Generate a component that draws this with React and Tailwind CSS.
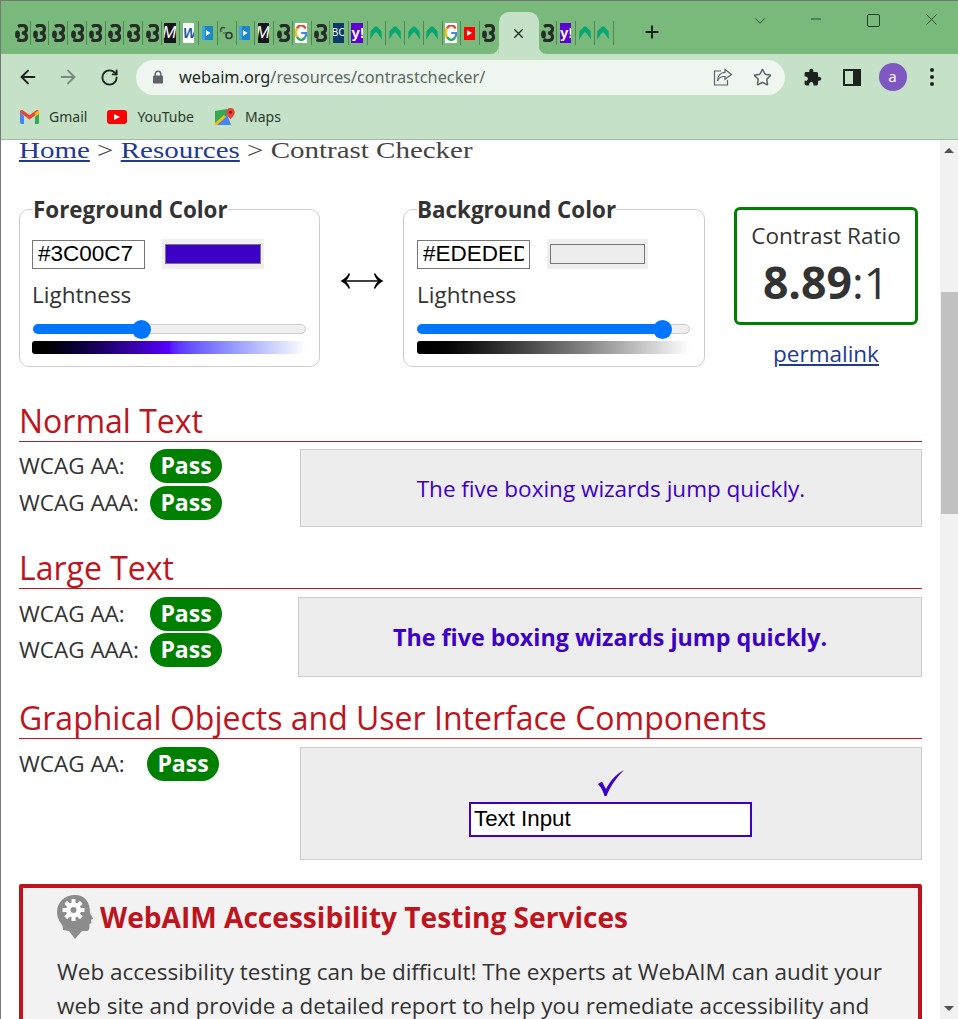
import { ArrowLeft, ArrowRight, RotateCw, Star, X, Plus, ChevronDown, Minus } from "lucide-react";

const SANS = "font-['Open_Sans',sans-serif]";

function Swirl() {
    return (
        <svg width="13" height="18" viewBox="0 0 13 18" className="shrink-0">
            <path
                d="M3 2.500 C6.500 0.500 11.500 1 11.500 5 C11.500 7.500 9.500 8.800 7 9 C9.500 9.200 11.500 10.500 11.500 13 C11.500 17 6 17.500 2.500 15.500"
                fill="none"
                stroke="#262c28"
                strokeWidth="3.200"
            />
            <ellipse cx="2.500" cy="10.500" rx="2.400" ry="4" fill="#262c28" />
        </svg>
    );
}

function MIcon() {
    return (
        <div className="w-[11.500px] h-[20px] bg-[#15161a] text-white text-[17px] leading-[20px] italic overflow-hidden whitespace-nowrap font-['Liberation_Sans',sans-serif]">
            <span className="inline-block -ml-[2px]">M</span>
        </div>
    );
}

function W3Icon() {
    return (
        <div className="w-[11.500px] h-[20px] bg-white text-[#1a5aa8] text-[14px] font-bold leading-[20px] overflow-hidden whitespace-nowrap italic font-['Liberation_Sans',sans-serif]">
            W3
        </div>
    );
}

function PlayIcon() {
    return (
        <svg width="11" height="14" viewBox="0 0 11 14">
            <rect width="11" height="14" fill="#1b87c9" />
            <path d="M0 0h3v14H0z" fill="#3aa6dd" />
            <path d="M4 4l4.500 3L4 10z" fill="#fff" />
        </svg>
    );
}

function CoIcon() {
    return (
        <svg width="13" height="14" viewBox="0 0 13 14">
            <path d="M5 2 C1 0 0 4 1 6" fill="none" stroke="#3a4a3c" strokeWidth="1.500" />
            <path d="M3 7h5" stroke="#4d6a50" strokeWidth="1.200" />
            <circle cx="9" cy="9.500" r="3" fill="none" stroke="#2e3a30" strokeWidth="1.500" />
        </svg>
    );
}

function GoogleIcon() {
    return (
        <div className="w-[12px] h-[20px] bg-white flex items-center justify-center overflow-hidden">
            <svg width="12" height="16" viewBox="0 0 12 16">
                <path d="M10.500 3.500 A5 6.500 0 0 0 2 3.500" fill="none" stroke="#ea4335" strokeWidth="2.400" />
                <path d="M2 3.500 A5 6.500 0 0 0 2 12" fill="none" stroke="#fbbc05" strokeWidth="2.400" />
                <path d="M2 12 A5 6.500 0 0 0 10 12.500" fill="none" stroke="#34a853" strokeWidth="2.400" />
                <path d="M10 12.500 C11 11 11.200 9.500 11 8 H6.200" fill="none" stroke="#4285f4" strokeWidth="2.200" />
            </svg>
        </div>
    );
}

function BcitIcon() {
    return (
        <div className="w-[11.500px] h-[20px] bg-[#0b3b66] text-white text-[10px] leading-[20px] overflow-hidden whitespace-nowrap font-['Liberation_Sans',sans-serif]">
            <span className="inline-block -ml-[1px]">BCIT</span>
        </div>
    );
}

function YahooIcon() {
    return (
        <div className="w-[11.500px] h-[20px] bg-[#5f01d1] text-white text-[15px] font-bold leading-[19px] text-center overflow-hidden whitespace-nowrap font-['Liberation_Sans',sans-serif]">
            y!
        </div>
    );
}

function ArchIcon() {
    return (
        <svg width="12" height="14" viewBox="0 0 12 14">
            <path d="M0 13.500 L0.500 5 L5 0.500 L7 0.500 L11.500 5 L12 13.500 L8 8 L6 6 L4 8 Z" fill="#0aa573" />
        </svg>
    );
}

function YtSmall() {
    return (
        <div className="w-[11.500px] h-[13px] bg-[#f00] flex items-center justify-center">
            <div className="w-0 h-0 border-y-[3px] border-y-transparent border-l-[5px] border-l-white" />
        </div>
    );
}

const before = [
    Swirl, Swirl, Swirl, Swirl, Swirl, Swirl, Swirl, Swirl, MIcon, W3Icon, PlayIcon, CoIcon, PlayIcon, MIcon,
    Swirl, GoogleIcon, Swirl, BcitIcon, YahooIcon, ArchIcon, ArchIcon, ArchIcon, ArchIcon, GoogleIcon, YtSmall,
];
const after = [Swirl, YahooIcon, ArchIcon, ArchIcon];

function TabCell({ Icon, last }) {
    return (
        <div className="w-[18.720px] h-[54px] pt-[21px] relative shrink-0">
            <div className={`h-[24px] flex items-center pl-[2.500px] ${last ? "" : "border-r border-[#4f8a55]"}`}>
                <Icon />
            </div>
        </div>
    );
}

function TabStrip() {
    return (
        <div className="h-[53px] bg-[#79ba7c] flex overflow-hidden shrink-0">
            <div className="w-[11px] shrink-0" />
            <div className="flex -mt-[1px]">
                {before.map((Icon, i) => (
                    <TabCell key={i} Icon={Icon} />
                ))}
                <TabCell Icon={Swirl} last />
            </div>
            <div className="relative w-[40px] h-[42px] mt-[11px] bg-[#c5e1c7] rounded-t-[10px] flex items-center justify-center shrink-0">
                <X size={15} strokeWidth={2.200} className="text-[#1d2a1f] mt-[1px]" />
                <div className="absolute -left-[8px] bottom-0 w-[8px] h-[8px] bg-[#c5e1c7] [clip-path:path('M8_0V8H0A8_8_0_0_0_8_0Z')]" />
                <div className="absolute -right-[8px] bottom-0 w-[8px] h-[8px] bg-[#c5e1c7] [clip-path:path('M0_0V8H8A8_8_0_0_1_0_0Z')]" />
            </div>
            <div className="flex -mt-[1px]">
                {after.map((Icon, i) => (
                    <TabCell key={i} Icon={Icon} />
                ))}
            </div>
            <Plus size={20} strokeWidth={2.400} className="ml-[28px] mt-[21px] text-[#15201a] shrink-0" />
            <div className="ml-[89px] flex items-start text-[#2c3d2e]">
                <ChevronDown size={18} strokeWidth={1.200} className="mt-[11px] shrink-0" />
                <div className="w-[36px] shrink-0" />
                <Minus size={16} strokeWidth={1.400} className="ml-[3px] mt-[10px] shrink-0" />
                <div className="w-[43px] shrink-0" />
                <div className="w-[13px] h-[13px] mt-[13px] border border-[#2c3d2e] rounded-[2px] shrink-0" />
                <div className="w-[42px] shrink-0" />
                <X size={19} strokeWidth={1.100} className="mt-[9px] shrink-0" />
            </div>
        </div>
    );
}

function IconButton({ children }) {
    return <div className="w-[40px] h-[46px] flex items-center justify-center shrink-0">{children}</div>;
}

function Toolbar() {
    return (
        <div className="h-[46px] bg-[#c5e1c7] flex items-center pl-[7px] shrink-0">
            <IconButton><ArrowLeft size={22} strokeWidth={2.100} className="text-[#1b221c]" /></IconButton>
            <IconButton><ArrowRight size={22} strokeWidth={2.100} className="text-[#7a8a7c]" /></IconButton>
            <div className="w-px" />
            <IconButton><RotateCw size={19} strokeWidth={2.300} className="text-[#1b221c]" /></IconButton>
            <div className="ml-[7px] w-[649px] h-[35px] rounded-full bg-[#eff6f0] flex items-center pl-[16px] pr-[13px] shrink-0">
                <svg width="12" height="14" viewBox="0 0 12 14" className="shrink-0">
                    <rect x="1" y="5.500" width="10" height="8" rx="1.200" fill="#5f6368" />
                    <path d="M3.200 6V4a2.800 2.800 0 0 1 5.600 0v2" fill="none" stroke="#5f6368" strokeWidth="1.400" />
                </svg>
                <div className="ml-[15px] flex-1 text-[16.300px] leading-[20px] whitespace-nowrap text-[#5c6a60] font-['Noto_Sans',sans-serif]">
                    <span className="text-[#1d2a1f]">webaim.org</span>/resources/contrastchecker/
                </div>
                <svg width="20" height="18" viewBox="0 0 20 18" fill="none" stroke="#5f6368" strokeWidth="1.200" className="mr-[20px] shrink-0">
                    <path d="M8 3H1.500v14h13v-5" />
                    <path d="M12 1.500l6.500 5-6.500 4.800V8.500C8 8.300 5.500 10 4.500 13c0-5 3-8.500 7.500-8.700z" />
                </svg>
                <Star size={19} strokeWidth={1.900} className="text-[#5f6368] shrink-0" />
            </div>
            <div className="w-[7px]" />
            <IconButton>
                <svg width="19" height="19" viewBox="0 0 24 24" fill="#1b221c">
                    <path d="M20.500 11H19V7c0-1.100-.9-2-2-2h-4V3.500C13 2.120 11.880 1 10.500 1S8 2.120 8 3.500V5H4c-1.100 0-1.990.9-1.990 2v3.800H3.500c1.490 0 2.700 1.210 2.700 2.700s-1.210 2.700-2.700 2.700H2V20c0 1.100.9 2 2 2h3.800v-1.500c0-1.490 1.210-2.700 2.700-2.700 1.490 0 2.700 1.210 2.700 2.700V22H17c1.100 0 2-.9 2-2v-4h1.500c1.380 0 2.500-1.120 2.500-2.500S21.880 11 20.500 11z" />
                </svg>
            </IconButton>
            <IconButton>
                <div className="w-[18px] h-[17px] border-[2.500px] border-[#1b221c] flex justify-end">
                    <div className="w-[6px] h-full bg-[#1b221c]" />
                </div>
            </IconButton>
            <IconButton>
                <div className="ml-[1px] w-[28px] h-[28px] rounded-full bg-[#7e57c2] text-white text-[15px] leading-[26px] text-center font-['Noto_Sans',sans-serif]">a</div>
            </IconButton>
            <IconButton>
                <div className="flex flex-col gap-[3px]">
                    <div className="w-[4px] h-[4px] rounded-full bg-[#1b221c]" />
                    <div className="w-[4px] h-[4px] rounded-full bg-[#1b221c]" />
                    <div className="w-[4px] h-[4px] rounded-full bg-[#1b221c]" />
                </div>
            </IconButton>
        </div>
    );
}

function Bookmarks() {
    return (
        <div className="h-[40px] bg-[#c5e1c7] border-b border-[#a3bba5] flex items-center pl-[19px] pb-[6px] text-[14px] text-[#2c3a2e] font-['Noto_Sans',sans-serif] shrink-0">
            <svg width="19" height="14" viewBox="0 0 19 14" className="shrink-0">
                <path d="M0 2v10.500a1.500 1.500 0 0 0 1.500 1.500H4V6z" fill="#4285f4" />
                <path d="M19 2v10.500a1.500 1.500 0 0 1-1.500 1.500H15V6z" fill="#34a853" />
                <path d="M0 2.500 L9.500 9.500 19 2.500 V1.800C19 0.300 17.300-.5 16 .5L9.500 5.300 3 .5C1.700-.5 0 .3 0 1.800z" fill="#ea4335" />
                <path d="M15 2.800 L19 0 V4 L15 7z" fill="#fbbc05" />
            </svg>
            <span className="ml-[10px]">Gmail</span>
            <div className="ml-[20px] w-[20px] h-[14px] rounded-[3px] bg-[#f00] flex items-center justify-center shrink-0">
                <div className="w-0 h-0 border-y-[3.500px] border-y-transparent border-l-[6px] border-l-white" />
            </div>
            <span className="ml-[10px]">YouTube</span>
            <svg width="20" height="18" viewBox="0 0 20 18" className="ml-[21px] shrink-0">
                <path d="M0 3 L12 1 V17 L0 17z" fill="#34a853" />
                <path d="M0 17 L12 6 L16 17z" fill="#4285f4" />
                <path d="M0 15 L9 7 L11 9 L2 17 H0z" fill="#fbbc05" />
                <path d="M15.500 0a4.300 4.300 0 0 0-4.300 4.300c0 3 4.300 7 4.300 7s4.300-4 4.300-7A4.300 4.300 0 0 0 15.500 0z" fill="#ea4335" />
                <circle cx="15.500" cy="4.300" r="1.500" fill="#8a1c14" />
            </svg>
            <span className="ml-[10px]">Maps</span>
        </div>
    );
}

function Slider({ pct }) {
    return (
        <div className="relative h-[10px] rounded-full bg-[#efefef] border border-[#cfcfcf] w-[273px]">
            <div className="absolute -left-px -top-px h-[10px] rounded-full bg-[#0075ff]" style={{ width: `${pct}%` }} />
            <div className="absolute -top-[5.500px] w-[19px] h-[19px] rounded-full bg-[#0075ff]" style={{ left: `calc(${pct}% - 10px)` }} />
        </div>
    );
}

function ColorPanel({ title, value, swatch, pct, gradient, className, legendClass, swatchClass, sliderClass, barWidth }) {
    return (
        <fieldset className={`${className} h-[174px] border border-[#ccc] rounded-[10px] shrink-0`}>
            <legend className={`${legendClass} translate-y-px text-[22.400px] leading-[32px] font-bold text-[#333]`}>{title}</legend>
            <div className="mt-[14px] flex items-center">
                <input
                    readOnly
                    value={value}
                    className="w-[113px] h-[29px] px-[5px] pb-[1px] border border-[#767676] bg-white text-black text-[22.500px] font-['Liberation_Sans',sans-serif]"
                />
                <div className={`${swatchClass} h-[30px] bg-[#efefef] px-[3px] py-[5px] shrink-0`}>
                    <div className="h-full border border-[#767676]" style={{ backgroundColor: swatch }} />
                </div>
            </div>
            <div className="mt-[10px] text-[22.500px] leading-[32px] text-[#333]">Lightness</div>
            <div className={`mt-[13px] ${sliderClass}`}>
                <Slider pct={pct} />
            </div>
            <div className={`mt-[7px] h-[13px] ${barWidth} rounded-l-[3px] ${gradient}`} />
        </fieldset>
    );
}

function Pass() {
    return (
        <div className="w-[72px] h-[34px] rounded-full bg-[#008000] text-white text-[23px] font-bold leading-[33px] text-center shrink-0">
            Pass
        </div>
    );
}

function WcagRow({ label, labelWidth }) {
    return (
        <div className="flex items-center">
            <div className={`${labelWidth} text-[22.500px] text-[#333] leading-[34px] shrink-0`}>{label}</div>
            <Pass />
        </div>
    );
}

function SectionHeading({ children, line, className }) {
    return (
        <h2 className={`h-[42px] text-[32px] leading-[41px] font-normal text-[#be141e] border-b whitespace-nowrap ${line} ${className}`}>
            {children}
        </h2>
    );
}

function Scrollbar() {
    return (
        <div className="w-[18px] h-full bg-[#f1f1f1] flex flex-col shrink-0">
            <div className="h-[20px] flex items-center justify-center">
                <div className="w-0 h-0 border-x-[5px] border-x-transparent border-b-[5px] border-b-[#505050]" />
            </div>
            <div className="h-[132px]" />
            <div className="h-[222px] ml-px bg-[#c1c1c1]" />
            <div className="mt-auto h-[22px] flex items-center justify-center">
                <div className="w-0 h-0 border-x-[5px] border-x-transparent border-t-[5px] border-t-[#505050]" />
            </div>
        </div>
    );
}

function HeadIcon() {
    const teeth = [0, 45, 90, 135, 180, 225, 270, 315];
    return (
        <svg width="37" height="44" viewBox="0 0 37 44" className="shrink-0">
            <path
                d="M18 0C8 0 0 7 0 17c0 6 3 10 5 13 1 2 1 4 1 5l6 1 6 8 7-8h5c1.500 0 2.500-2 2.500-4v-3l2-1-.5-3 2-1.500-3-5.500C33 7 28 0 18 0z"
                fill="#8c8c8c"
            />
            <g transform="translate(16.500 15)" fill="#fff">
                {teeth.map((a) => (
                    <rect key={a} x="-2" y="-11" width="4" height="6" transform={`rotate(${a})`} />
                ))}
                <circle r="7.500" />
            </g>
            <circle cx="16.500" cy="15" r="3" fill="#8c8c8c" />
        </svg>
    );
}

function SwapArrow() {
    return (
        <svg width="44" height="20" viewBox="0 0 44 20" className="mx-auto">
            <path d="M3 10H41" stroke="#000" strokeWidth="1.400" />
            <path d="M0.500 10 C4 8.500 7 5.500 9 2 L10 3 C9 6 7.500 8.500 5.500 10 C7.500 11.500 9 14 10 17 L9 18 C7 14.500 4 11.500 0.500 10z" fill="#000" />
            <path d="M43.500 10 C40 8.500 37 5.500 35 2 L34 3 C35 6 36.500 8.500 38.500 10 C36.500 11.500 35 14 34 17 L35 18 C37 14.500 40 11.500 43.500 10z" fill="#000" />
        </svg>
    );
}

function Page() {
    return (
        <div className={`flex-1 min-w-0 h-full overflow-hidden pl-[18px] pr-[18px] ${SANS}`}>
            <div className="h-[24px] text-[23px] leading-[21px] text-[#444] whitespace-nowrap font-['Liberation_Serif',serif] origin-left scale-x-[1.260]">
                <a className="text-[#1f3a93] underline">Home</a> &gt; <a className="text-[#1f3a93] underline">Resources</a> &gt; Contrast Checker
            </div>

            <div className="mt-[29px] flex items-start">
                <ColorPanel
                    title="Foreground Color"
                    value="#3C00C7"
                    swatch="#3c00c7"
                    pct={40}
                    className="w-[301px] px-[12px]"
                    legendClass="ml-[1px]"
                    swatchClass="ml-[17px] w-[102px]"
                    sliderClass="ml-[1px]"
                    barWidth="w-[274px]"
                    gradient="bg-linear-to-r from-black via-[#5500ff] to-white"
                />
                <div className="w-[83px] mt-[78px] shrink-0">
                    <SwapArrow />
                </div>
                <ColorPanel
                    title="Background Color"
                    value="#EDEDED"
                    swatch="#ededed"
                    pct={90.500}
                    className="w-[302px] px-[13px]"
                    legendClass=""
                    swatchClass="ml-[17px] w-[101px]"
                    sliderClass=""
                    barWidth="w-[273px]"
                    gradient="bg-linear-to-r from-black to-white"
                />
                <div className="ml-[29px] mt-[14px] w-[184px] shrink-0 flex flex-col items-center">
                    <div className="w-full h-[118px] border-[3px] border-[#008000] rounded-[6px] flex flex-col items-center text-[#333]">
                        <div className="mt-[10px] text-[22.500px] leading-[32px]">Contrast Ratio</div>
                        <div className="mt-[1px] text-[44.500px] leading-[58px]"><span className="font-bold">8.89</span>:1</div>
                    </div>
                    <a className="mt-[13px] text-[22.500px] leading-[32px] text-[#1f3a93] underline">permalink</a>
                </div>
            </div>

            <SectionHeading line="border-[#a3202c]" className="mt-[30px]">Normal Text</SectionHeading>
            <div className="mt-[7px] flex items-start">
                <div className="w-[281px] flex flex-col gap-[2.500px] shrink-0">
                    <WcagRow label="WCAG AA:" labelWidth="w-[131px]" />
                    <WcagRow label="WCAG AAA:" labelWidth="w-[131px]" />
                </div>
                <div className="flex-1 h-[78px] pt-[2px] bg-[#ededed] border border-[#ccc] flex items-center justify-center text-[22.500px] text-[#3c00c7]">
                    The five boxing wizards jump quickly.
                </div>
            </div>

            <SectionHeading line="border-[#c4161e]" className="mt-[20px]">Large Text</SectionHeading>
            <div className="mt-[8px] flex items-start">
                <div className="w-[279px] flex flex-col gap-[2px] shrink-0">
                    <WcagRow label="WCAG AA:" labelWidth="w-[131px]" />
                    <WcagRow label="WCAG AAA:" labelWidth="w-[131px]" />
                </div>
                <div className="flex-1 h-[80px] bg-[#ededed] border border-[#ccc] flex items-center justify-center text-[23.300px] font-bold text-[#3c00c7]">
                    The five boxing wizards jump quickly.
                </div>
            </div>

            <SectionHeading line="border-[#c4161e]" className="mt-[20px]">Graphical Objects and User Interface Components</SectionHeading>
            <div className="mt-[8px] flex items-start">
                <div className="w-[281px] shrink-0">
                    <WcagRow label="WCAG AA:" labelWidth="w-[128px]" />
                </div>
                <div className="flex-1 h-[113px] bg-[#ededed] border border-[#ccc] flex flex-col items-center">
                    <svg width="28" height="28" viewBox="0 0 28 28" className="mt-[21px]" fill="#3c00c7">
                        <path d="M1 15 L5 12.500 L9 20 C13 12 19 5 27 1 C20 8 14 16 9.500 27 H7.500 C6 22 4 18 1 15z" />
                    </svg>
                    <input
                        readOnly
                        value="Text Input"
                        className="mt-[5px] -ml-[1px] w-[283px] h-[35px] px-[3px] pb-[2px] border-2 border-[#3c00c7] bg-white text-black text-[22.300px] font-['Liberation_Sans',sans-serif]"
                    />
                </div>
            </div>

            <div className="mt-[24px] h-[300px] border-4 border-[#be141e] rounded-[2px] bg-[#f2f2f2] pl-[34px] pr-[30px]">
                <div className="mt-[7px] flex items-center">
                    <HeadIcon />
                    <h2 className="ml-[6px] text-[28.100px] leading-[38px] font-bold text-[#be141e] whitespace-nowrap">WebAIM Accessibility Testing Services</h2>
                </div>
                <p className="mt-[16px] text-[22.500px] leading-[34px] text-[#333]">
                    Web accessibility testing can be difficult! The experts at WebAIM can audit your web site and provide a detailed report to help you remediate accessibility and
                </p>
            </div>
        </div>
    );
}

function App() {
    return (
        <div className="w-[958px] h-[1019px] overflow-hidden flex flex-col bg-white border-l border-t border-[#777]">
            <TabStrip />
            <Toolbar />
            <Bookmarks />
            <div className="flex-1 min-h-0 flex">
                <Page />
                <Scrollbar />
            </div>
        </div>
    );
}

export default App;
